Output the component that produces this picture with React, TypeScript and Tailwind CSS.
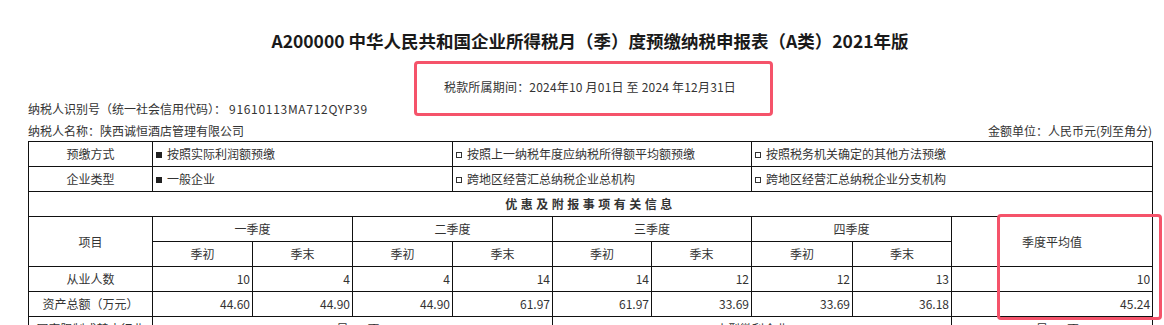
import React from "react";

const FONT = { fontFamily: '"Noto Sans CJK SC", "Noto Sans", sans-serif' };

function Filled() {
  return <span className="inline-block w-[6px] h-[6px] bg-[#222] mr-[5px] align-[1px]" />;
}
function Empty() {
  return <span className="inline-block w-[6px] h-[6px] border border-[#333] mr-[5px] align-[1px]" />;
}

const td = "border border-[#111] h-[25px] p-0 text-[12px] leading-[16px] text-[#333]";
const tdc = td + " text-center";
const tdr = td + " text-right pr-[2px]";
const tdl = td + " text-left pl-[3px]";

export default function App() {
  const q = ["一季度", "二季度", "三季度", "四季度"];
  const emp = [10, 4, 4, 14, 14, 12, 12, 13];
  const assets = ["44.60", "44.90", "44.90", "61.97", "61.97", "33.69", "33.69", "36.18"];
  return (
    <div className="relative w-[1164px] h-[325px] overflow-hidden bg-white" style={FONT}>
      <div className="ml-[28px] w-[1124px]">
        <div className="pt-[29px] h-[54px] leading-[24px] text-center text-[17.5px] font-bold text-[#1a1a1a]">
          A200000 中华人民共和国企业所得税月（季）度预缴纳税申报表（A类）2021年版
        </div>
        <div className="mt-[23px] h-[20px] leading-[20px] text-center text-[12px] text-[#333] tracking-[0.2px]">
          税款所属期间：2024年10 月01日 至 2024 年12月31日
        </div>
        <div className="mt-[2px] h-[20px] leading-[20px] text-[12px] text-[#333]">
          纳税人识别号（统一社会信用代码）：
          <span className="ml-[3px] tracking-[0.7px]">91610113MA712QYP39</span>
        </div>
        <div className="mt-[2px] h-[20px] leading-[20px] text-[12px] text-[#333] flex justify-between">
          <span>纳税人名称：陕西诚恒酒店管理有限公司</span>
          <span>金额单位：人民币元(列至角分)</span>
        </div>
        <table className="table-fixed border-collapse w-[1124px]">
          <colgroup>
            <col className="w-[124px]" />
            <col className="w-[100px]" />
            <col className="w-[100px]" />
            <col className="w-[100px]" />
            <col className="w-[100px]" />
            <col className="w-[99px]" />
            <col className="w-[100px]" />
            <col className="w-[101px]" />
            <col className="w-[99px]" />
            <col className="w-[201px]" />
          </colgroup>
          <tbody>
            <tr>
              <td className={tdc}>预缴方式</td>
              <td className={tdl} colSpan={3}><Filled />按照实际利润额预缴</td>
              <td className={tdl} colSpan={3}><Empty />按照上一纳税年度应纳税所得额平均额预缴</td>
              <td className={tdl} colSpan={3}><Empty />按照税务机关确定的其他方法预缴</td>
            </tr>
            <tr>
              <td className={tdc}>企业类型</td>
              <td className={tdl} colSpan={3}><Filled />一般企业</td>
              <td className={tdl} colSpan={3}><Empty />跨地区经营汇总纳税企业总机构</td>
              <td className={tdl} colSpan={3}><Empty />跨地区经营汇总纳税企业分支机构</td>
            </tr>
            <tr>
              <td className={tdc + " font-bold tracking-[3.5px] text-[#222]"} colSpan={10}>
                优惠及附报事项有关信息
              </td>
            </tr>
            <tr>
              <td className={tdc} rowSpan={2}>项目</td>
              {q.map((s) => (
                <td key={s} className={tdc} colSpan={2}>{s}</td>
              ))}
              <td className={tdc} rowSpan={2}>季度平均值</td>
            </tr>
            <tr>
              {q.map((s) => (
                <React.Fragment key={s}>
                  <td className={tdc}>季初</td>
                  <td className={tdc}>季末</td>
                </React.Fragment>
              ))}
            </tr>
            <tr>
              <td className={tdc}>从业人数</td>
              {emp.map((v, i) => (
                <td key={i} className={tdr}>{v}</td>
              ))}
              <td className={tdr}>10</td>
            </tr>
            <tr>
              <td className={tdc}>资产总额（万元）</td>
              {assets.map((v, i) => (
                <td key={i} className={tdr}>{v}</td>
              ))}
              <td className={tdr}>45.24</td>
            </tr>
            <tr>
              <td className={tdc}>国家限制或禁止行业</td>
              <td className={tdc} colSpan={4}><Empty />是&nbsp;&nbsp;&nbsp;<Filled />否</td>
              <td className={tdc} colSpan={4}>小型微利企业</td>
              <td className={tdc}><Filled />是&nbsp;&nbsp;&nbsp;<Empty />否</td>
            </tr>
          </tbody>
        </table>
      </div>
      <div className="absolute left-[414px] top-[61px] w-[359px] h-[55px] border-[3px] border-[#f5536a] rounded-[4px]" />
      <div className="absolute left-[997px] top-[214px] w-[165px] h-[106px] border-[3px] border-[#f5536a] rounded-[4px]" />
    </div>
  );
}
